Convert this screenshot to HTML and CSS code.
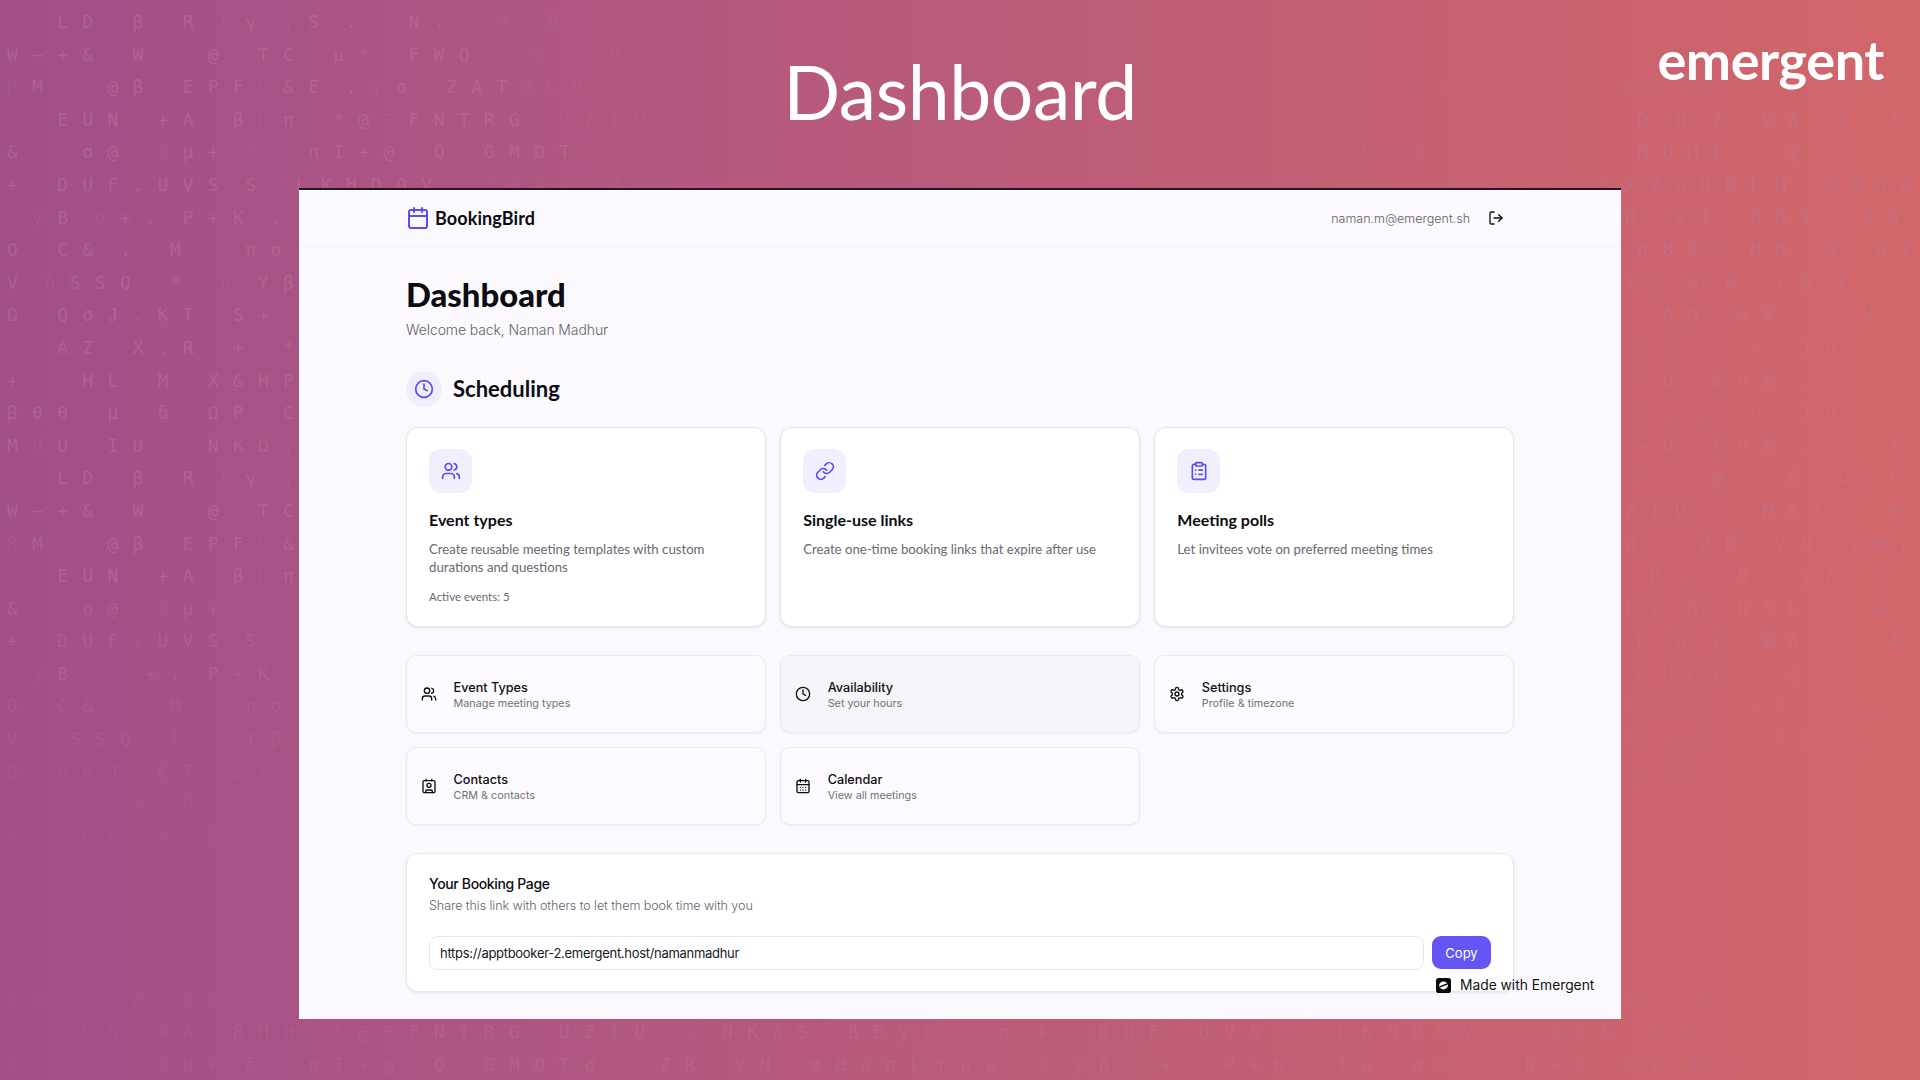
FILE: index.html
```html
<!DOCTYPE html>
<html lang="en">
<head>
<meta charset="utf-8">
<title>BookingBird Dashboard</title>
<link rel="stylesheet" href="styles.css">
</head>
<body>
<div class="stage">
  <div class="rain rain-left" aria-hidden="true">
    <div class="r">    L D   β   R  <span class="f">δ</span> γ  . S  .    N .    <span class="f">H - N</span></div>
    <div class="r">W — + &amp;   W     @   T C   μ *   F W Q     <span class="f">R   — U</span></div>
    <div class="r"><span class="f">β</span> M     @ β   E P F <span class="f">L</span> &amp; E  . <span class="f">γ</span> σ   Z A T <span class="f">σ L O</span></div>
    <div class="r">    E U N   + A   β <span class="f">H</span> π   * @ <span class="f">θ</span> F N T R G   <span class="f">U Z I U</span></div>
    <div class="r">&amp;     σ @   <span class="f">θ</span> μ +  <span class="f">δ</span>    π I + @   Q   G M O T <span class="f">σ</span></div>
    <div class="r">+   D U F . U V S  S   L K H D Q V    <span class="f">* @ X &amp;   R</span></div>
    <div class="r">  <span class="f">γ</span> B  <span class="f">O</span> + .  P + K  .</div>
    <div class="r">O   C &amp;  .   M     π σ</div>
    <div class="r">V  <span class="f">δ</span> S S Q   *   <span class="f">δ</span>  Y β</div>
    <div class="r">Ω   Q σ J . K T   S +</div>
    <div class="r">    A Z   X . R   +   *</div>
    <div class="r">+     H L   M   X &amp; H P</div>
    <div class="r">β θ θ   μ   δ   Ω P   C</div>
    <div class="r">M <span class="f">H</span> U   I U     N K Ω .</div>
    <div class="r">    L D   β   R  <span class="f">δ</span> γ  .</div>
    <div class="r">W — + &amp;   W     @   T C</div>
    <div class="r"><span class="f">β</span> M     @ β   E P F <span class="f">L</span> &amp;</div>
    <div class="r">    E U N   + A   β <span class="f">H</span> π</div>
    <div class="r d1">&amp;     σ @   <span class="f">θ</span> μ +  <span class="f">δ</span></div>
    <div class="r d1">+   D U F . U V S  S</div>
    <div class="r d1">  <span class="f">γ</span> B      + .  P + K  .</div>
    <div class="r d2">O   C &amp;  .   M     π σ</div>
    <div class="r d2">V    S S Q   *     Y β</div>
    <div class="r d3">Ω   Q σ J . K T   S +</div>
    <div class="r d4">    A Z   X . R   +</div>
    <div class="r d4">+     H L   M   X &amp;</div>
    <div class="r">&nbsp;</div>
    <div class="r">&nbsp;</div>
    <div class="r">&nbsp;</div>
    <div class="r">&nbsp;</div>
    <div class="r d4">β M     @ β   E P F</div>
    <div class="r"><span class="d4">    E U N   </span><span class="d2">+ A   β H π   * @ θ </span><span class="d1">F N T R G   U Z I U   .  N K λ S   β E γ C     π  +    D U F . U V S  S   L K H D Q V .  * @ X &amp;</span></div>
    <div class="r"><span class="d4">&amp;     σ @   θ </span><span class="d2">μ +  δ    π I + @   </span><span class="d1">Q   G M O T σ     Z R   V N   φ @ μ π L Y μ μ   </span><span class="d3">O  γ </span><span class="d1">B    + .  P + K  . T μ   σ C      N + Z</span></div>
  </div>

  <div class="rain rain-mid" aria-hidden="true">
    <div class="r">&nbsp;</div>
    <div class="r">&nbsp;</div>
    <div class="r d4">     N     θ θ      N *  Z</div>
    <div class="r d3">               * U H    .</div>
    <div class="r d3">    H  H O β     μ   * * —</div>
    <div class="r d3">        @     S  O U   δ  S</div>
  </div>

  <div class="rain rain-right" aria-hidden="true">
    <div class="r">&nbsp;</div>
    <div class="r">&nbsp;</div>
    <div class="r d3">C +  N   U T L      @ |</div>
    <div class="r"> Ω  Ω  Z   W λ   X   A</div>
    <div class="r"> M U M E   <span class="f">*</span> γ .  .  .</div>
    <div class="r">X Z Ω U β L M   @ Q O &amp;</div>
    <div class="r">R   + T   D Q I    E δ</div>
    <div class="r"> π B δ <span class="f">θ</span>  M N   &amp;   θ T</div>
    <div class="r">+ .  G  E   + φ  E .  <span class="f">.</span></div>
    <div class="r">   A Ω   @ X       V</div>
    <div class="r"> <span class="f">θ</span> .  .   <span class="f">O</span>   J O   .</div>
    <div class="r"> — U   &amp; σ &amp;  .   .  <span class="f">A</span></div>
    <div class="r"> <span class="f">θ</span> .  .   <span class="f">O</span>   J O   .</div>
    <div class="r"> — U   &amp; σ &amp;  .   .  A</div>
    <div class="r"> <span class="f">*</span>     @ <span class="f">U</span>   S   U &amp; F</div>
    <div class="r">Z I U   .  N K λ S   β</div>
    <div class="r">σ     Z R   V N   φ @ μ</div>
    <div class="r">  R  .   θ .  γ λ   J</div>
    <div class="r">C +  N   U T L      @ |</div>
    <div class="r"> Ω  Ω  Z   W λ   X   A</div>
    <div class="r d1"> M U M E   * γ .  .  .</div>
    <div class="r d2">X Z Ω U β L M   @ Q O &amp;</div>
    <div class="r d3">R   + T   D Q I    E δ</div>
    <div class="r d4"> π B δ θ  M N   &amp;   θ T</div>
    <div class="r">&nbsp;</div>
    <div class="r">&nbsp;</div>
    <div class="r">&nbsp;</div>
    <div class="r">&nbsp;</div>
    <div class="r">&nbsp;</div>
    <div class="r">&nbsp;</div>
    <div class="r d4">σ     Z R</div>
    <div class="r d2">  R  .   θ</div>
    <div class="r d1">C +  N   U</div>
  </div>

  <header class="banner">
    <h1 class="banner-title">Dashboard</h1>
    <div class="brand-mark">emergent</div>
  </header>

  <section class="frame">
    <nav class="topbar">
      <div class="container topbar-inner">
        <div class="logo">
          <svg class="icon icon-24 accent" viewBox="0 0 24 24"><path d="M8 2v4"/><path d="M16 2v4"/><rect width="18" height="18" x="3" y="4" rx="2"/><path d="M3 10h18"/></svg>
          <span class="logo-text">BookingBird</span>
        </div>
        <div class="user">
          <span class="user-email">naman.m@emergent.sh</span>
          <svg class="icon icon-16 ink" viewBox="0 0 24 24"><path d="M9 21H5a2 2 0 0 1-2-2V5a2 2 0 0 1 2-2h4"/><polyline points="16 17 21 12 16 7"/><line x1="21" x2="9" y1="12" y2="12"/></svg>
        </div>
      </div>
    </nav>

    <main class="container main">
      <h2 class="page-title">Dashboard</h2>
      <p class="page-sub">Welcome back, Naman Madhur</p>

      <div class="section-head">
        <span class="section-badge">
          <svg class="icon icon-20 accent" viewBox="0 0 24 24"><circle cx="12" cy="12" r="10"/><polyline points="12 6 12 12 16 14"/></svg>
        </span>
        <h3 class="section-title">Scheduling</h3>
      </div>

      <div class="grid feature-grid">
        <article class="feature">
          <span class="feature-icon"><svg class="icon icon-20 accent" viewBox="0 0 24 24"><path d="M16 21v-2a4 4 0 0 0-4-4H6a4 4 0 0 0-4 4v2"/><circle cx="9" cy="7" r="4"/><path d="M22 21v-2a4 4 0 0 0-3-3.87"/><path d="M16 3.13a4 4 0 0 1 0 7.75"/></svg></span>
          <h4 class="feature-title">Event types</h4>
          <p class="feature-desc">Create reusable meeting templates with custom durations and questions</p>
          <p class="feature-meta">Active events: 5</p>
        </article>
        <article class="feature">
          <span class="feature-icon"><svg class="icon icon-20 accent" viewBox="0 0 24 24"><path d="M10 13a5 5 0 0 0 7.54.54l3-3a5 5 0 0 0-7.07-7.07l-1.72 1.71"/><path d="M14 11a5 5 0 0 0-7.54-.54l-3 3a5 5 0 0 0 7.07 7.07l1.71-1.71"/></svg></span>
          <h4 class="feature-title">Single-use links</h4>
          <p class="feature-desc">Create one-time booking links that expire after use</p>
        </article>
        <article class="feature">
          <span class="feature-icon"><svg class="icon icon-20 accent" viewBox="0 0 24 24"><rect width="8" height="4" x="8" y="2" rx="1" ry="1"/><path d="M16 4h2a2 2 0 0 1 2 2v14a2 2 0 0 1-2 2H6a2 2 0 0 1-2-2V6a2 2 0 0 1 2-2h2"/><path d="M12 11h4"/><path d="M12 16h4"/><path d="M8 11h.01"/><path d="M8 16h.01"/></svg></span>
          <h4 class="feature-title">Meeting polls</h4>
          <p class="feature-desc">Let invitees vote on preferred meeting times</p>
        </article>
      </div>

      <div class="grid nav-grid">
        <a class="nav-card">
          <svg class="icon icon-16 ink" viewBox="0 0 24 24"><path d="M16 21v-2a4 4 0 0 0-4-4H6a4 4 0 0 0-4 4v2"/><circle cx="9" cy="7" r="4"/><path d="M22 21v-2a4 4 0 0 0-3-3.87"/><path d="M16 3.13a4 4 0 0 1 0 7.75"/></svg>
          <span class="nav-text"><span class="nav-title">Event Types</span><span class="nav-sub">Manage meeting types</span></span>
        </a>
        <a class="nav-card nav-card-active">
          <svg class="icon icon-16 ink" viewBox="0 0 24 24"><circle cx="12" cy="12" r="10"/><polyline points="12 6 12 12 16 14"/></svg>
          <span class="nav-text"><span class="nav-title">Availability</span><span class="nav-sub">Set your hours</span></span>
        </a>
        <a class="nav-card">
          <svg class="icon icon-16 ink" viewBox="0 0 24 24"><path d="M12.22 2h-.44a2 2 0 0 0-2 2v.18a2 2 0 0 1-1 1.73l-.43.25a2 2 0 0 1-2 0l-.15-.08a2 2 0 0 0-2.73.73l-.22.38a2 2 0 0 0 .73 2.73l.15.1a2 2 0 0 1 1 1.72v.51a2 2 0 0 1-1 1.74l-.15.09a2 2 0 0 0-.73 2.73l.22.38a2 2 0 0 0 2.73.73l.15-.08a2 2 0 0 1 2 0l.43.25a2 2 0 0 1 1 1.73V20a2 2 0 0 0 2 2h.44a2 2 0 0 0 2-2v-.18a2 2 0 0 1 1-1.73l.43-.25a2 2 0 0 1 2 0l.15.08a2 2 0 0 0 2.73-.73l.22-.39a2 2 0 0 0-.73-2.73l-.15-.08a2 2 0 0 1-1-1.74v-.5a2 2 0 0 1 1-1.74l.15-.09a2 2 0 0 0 .73-2.73l-.22-.38a2 2 0 0 0-2.73-.73l-.15.08a2 2 0 0 1-2 0l-.43-.25a2 2 0 0 1-1-1.73V4a2 2 0 0 0-2-2z"/><circle cx="12" cy="12" r="3"/></svg>
          <span class="nav-text"><span class="nav-title">Settings</span><span class="nav-sub">Profile &amp; timezone</span></span>
        </a>
        <a class="nav-card">
          <svg class="icon icon-16 ink" viewBox="0 0 24 24"><path d="M16 2v2"/><path d="M7 22v-2a2 2 0 0 1 2-2h6a2 2 0 0 1 2 2v2"/><path d="M8 2v2"/><circle cx="12" cy="11" r="3"/><rect x="3" y="4" width="18" height="18" rx="2"/></svg>
          <span class="nav-text"><span class="nav-title">Contacts</span><span class="nav-sub">CRM &amp; contacts</span></span>
        </a>
        <a class="nav-card">
          <svg class="icon icon-16 ink" viewBox="0 0 24 24"><path d="M8 2v4"/><path d="M16 2v4"/><rect width="18" height="18" x="3" y="4" rx="2"/><path d="M3 10h18"/><path d="M8 14h.01"/><path d="M12 14h.01"/><path d="M16 14h.01"/><path d="M8 18h.01"/><path d="M12 18h.01"/><path d="M16 18h.01"/></svg>
          <span class="nav-text"><span class="nav-title">Calendar</span><span class="nav-sub">View all meetings</span></span>
        </a>
      </div>

      <section class="booking">
        <h4 class="booking-title">Your Booking Page</h4>
        <p class="booking-sub">Share this link with others to let them book time with you</p>
        <div class="booking-row">
          <div class="booking-url">https://apptbooker-2.emergent.host/namanmadhur</div>
          <button class="copy-btn">Copy</button>
        </div>
      </section>
    </main>

    <div class="made-with">
      <svg class="made-icon" viewBox="0 0 16 16"><rect width="16" height="16" rx="3" fill="#08080c"/><ellipse cx="8" cy="8" rx="4.6" ry="4.2" fill="#fff"/><path d="M4 9.4 12 6.4" stroke="#08080c" stroke-width="1.5"/></svg>
      <span>Made with Emergent</span>
    </div>
  </section>
</div>
</body>
</html>
```
FILE: styles.css
```css
* { box-sizing: border-box; }
html, body { margin: 0; padding: 0; }
body { font-family: "Inter", "Liberation Sans", sans-serif; color: #0c0c12; }
h1, h2, h3, h4, p { margin: 0; }

.stage {
  position: relative;
  width: 1920px;
  height: 1080px;
  overflow: hidden;
  background: linear-gradient(90deg, #a24f8a 0%, #d2676a 100%);
}

/* falling-character backdrop */
.rain {
  position: absolute;
  top: 6px;
  font-family: "DejaVu Sans Mono", monospace;
  font-size: 18px;
  line-height: 32.6px;
  letter-spacing: 1.71px;
  color: rgba(188, 118, 152, 0.5);
}
.rain-left { left: 7px; }
.rain-mid { left: 1274px; }
.rain-right { left: 1625px; }
.r { height: 32.6px; white-space: pre; }
.f { opacity: 0.4; }
.d1 { opacity: 0.8; }
.d2 { opacity: 0.55; }
.d3 { opacity: 0.4; }
.d4 { opacity: 0.22; }

.banner {
  position: relative;
  height: 188px;
  display: flex;
  justify-content: center;
  padding-top: 46px;
}
.banner-title {
  font-family: "Lato", sans-serif;
  font-weight: 400;
  font-size: 75px;
  line-height: 90px;
  color: #fff;
  letter-spacing: -0.4px;
}
.brand-mark {
  position: absolute;
  top: 25px;
  right: 36px;
  font-family: "Lato", sans-serif;
  font-weight: 700;
  font-size: 54px;
  line-height: 70px;
  letter-spacing: -0.4px;
  color: #fff;
}

.frame {
  position: relative;
  width: 1322px;
  height: 831px;
  margin: 0 auto;
  background: #fbf9fd;
  border-top: 2px solid #1d1a2b;
}
.container { width: 1108px; margin: 0 auto; }

.icon { fill: none; stroke: currentColor; stroke-width: 2; stroke-linecap: round; stroke-linejoin: round; flex: none; display: block; }
.icon-24 { width: 24px; height: 24px; }
.icon-20 { width: 20px; height: 20px; }
.icon-16 { width: 16px; height: 16px; }
.accent { color: #5a4cf4; }
.ink { color: #0c0c12; }

.topbar { height: 57px; border-bottom: 1px solid #f3f1f6; }
.topbar-inner { height: 56px; display: flex; align-items: center; justify-content: space-between; }
.logo { display: flex; align-items: center; gap: 5px; }
.logo-text { font-family: "Lato", sans-serif; font-weight: 700; font-size: 18px; letter-spacing: 0.1px; }
.user { display: flex; align-items: center; gap: 18px; padding-right: 10px; }
.user-email { font-size: 12.5px; font-weight: 300; color: #5f5c68; }

.main { padding-top: 30px; }
.page-title { font-family: "Lato", sans-serif; font-weight: 900; font-size: 32.8px; line-height: 36px; }
.page-sub { margin-top: 5px; font-size: 14px; font-weight: 300; line-height: 24px; color: #65626e; letter-spacing: -0.1px; }

.section-head { display: flex; align-items: center; gap: 11px; margin-top: 29px; }
.section-badge { width: 36px; height: 36px; border-radius: 50%; background: #f0edfd; display: flex; align-items: center; justify-content: center; }
.section-title { font-family: "Lato", sans-serif; font-weight: 700; font-size: 22px; line-height: 30px; }

.grid { display: grid; grid-template-columns: repeat(3, 1fr); column-gap: 14.5px; }
.feature-grid { margin-top: 19.5px; }
.feature {
  height: 200px;
  padding: 21px 22px;
  background: #fff;
  border: 1px solid #e6e4ea;
  border-radius: 12px;
  box-shadow: 0 1px 3px rgba(30, 20, 60, 0.1);
  position: relative;
}
.feature-icon { width: 43px; height: 44px; border-radius: 12px; background: #f1eefe; display: flex; align-items: center; justify-content: center; }
.feature-title { margin-top: 16px; font-family: "Lato", sans-serif; font-weight: 700; font-size: 16px; line-height: 21px; }
.feature-desc { margin-top: 10px; font-family: "Lato", sans-serif; font-size: 13.2px; line-height: 18px; color: #6a6773; }
.feature-meta { margin-top: 13px; font-family: "Lato", sans-serif; font-size: 11.5px; line-height: 16px; color: #6a6773; }

.nav-grid { margin-top: 28px; row-gap: 14px; }
.nav-card {
  height: 78px;
  padding: 0 14px;
  display: flex;
  align-items: center;
  gap: 16.5px;
  background: #fcfafe;
  border: 1px solid #ebe9ef;
  border-radius: 10px;
  box-shadow: 0 1px 2px rgba(30, 20, 60, 0.05);
}
.nav-card-active { background: #f5f4f8; }
.nav-text { display: flex; flex-direction: column; padding-top: 3px; }
.nav-title { font-size: 12.7px; font-weight: 500; line-height: 16px; color: #0e0e14; }
.nav-sub { font-size: 10.8px; line-height: 15px; color: #72707a; }

.booking {
  margin-top: 28px;
  height: 139px;
  padding: 21px 22px;
  background: #fff;
  border: 1px solid #e9e7ed;
  border-radius: 12px;
  box-shadow: 0 1px 3px rgba(30, 20, 60, 0.1);
}
.booking-title { font-size: 14px; font-weight: 500; line-height: 18px; letter-spacing: -0.35px; }
.booking-sub { margin-top: 4px; font-size: 12.6px; line-height: 18px; font-weight: 300; color: #66636f; letter-spacing: -0.1px; }
.booking-row { display: flex; gap: 8px; margin-top: 21px; align-items: center; }
.booking-url {
  flex: 1;
  height: 34px;
  padding: 0 10px;
  display: flex;
  align-items: center;
  font-size: 13px;
  color: #17171d;
  background: #fff;
  border: 1px solid #e9e7ed;
  border-radius: 8px;
  letter-spacing: -0.3px;
}
.copy-btn {
  width: 59px;
  height: 33px;
  border: 0;
  border-radius: 9px;
  background: #6555f5;
  color: #fff;
  font: 400 13px "Inter", sans-serif;
}

.made-with {
  position: absolute;
  left: 1137px;
  top: 786px;
  display: flex;
  align-items: center;
  gap: 9px;
  font-size: 13.8px;
  line-height: 18px;
  color: #111;
  white-space: nowrap;
}
.made-icon { width: 15px; height: 15px; display: block; }
```
